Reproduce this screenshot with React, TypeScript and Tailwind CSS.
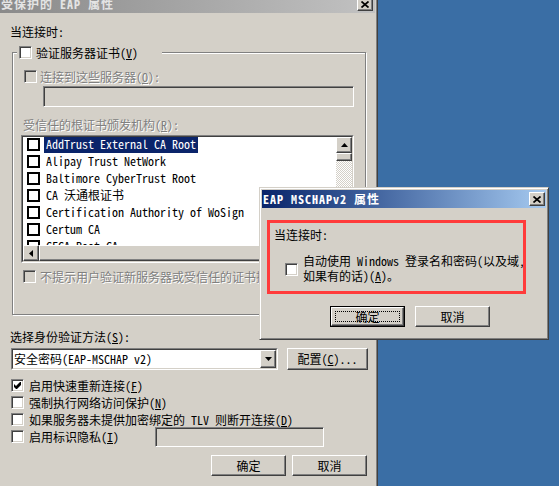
import React from 'react';

const FONT = "font-['Noto_Sans_Mono_CJK_SC','Noto_Sans_CJK_SC',sans-serif]";

// classic 3D edges
const raised =
  'bg-[#d4d0c8] border border-t-white border-l-white border-r-[#404040] border-b-[#404040] shadow-[inset_-1px_-1px_0_#808080]';
const sunken =
  'border border-t-[#808080] border-l-[#808080] border-r-white border-b-white shadow-[inset_1px_1px_0_#404040,inset_-1px_-1px_0_#d4d0c8]';
const frame =
  'bg-[#d4d0c8] p-[2px] border border-t-[#d4d0c8] border-l-[#d4d0c8] border-r-[#404040] border-b-[#404040] shadow-[inset_1px_1px_0_#ffffff,inset_-1px_-1px_0_#808080]';
const dis = 'text-[#808080] [text-shadow:1px_1px_0_#ffffff]';

const certs = [
  'AddTrust External CA Root',
  'Alipay Trust NetWork',
  'Baltimore CyberTrust Root',
  'CA 沃通根证书',
  'Certification Authority of WoSign',
  'Certum CA',
  'CFCA Root CA',
];

function Check({ checked = false, disabled = false }: { checked?: boolean; disabled?: boolean }) {
  return (
    <div
      className={`w-[13px] h-[13px] shrink-0 flex items-center justify-center ${sunken} ${
        disabled ? 'bg-[#d4d0c8]' : 'bg-white'
      }`}
    >
      {checked && (
        <svg width="7" height="7" viewBox="0 0 7 7">
          <polygon points="0,2 2,4 6,0 7,0 7,3 3,7 2,7 0,5" fill="#000" />
        </svg>
      )}
    </div>
  );
}

function CloseBtn() {
  return (
    <div className={`w-[16px] h-[14px] flex items-center justify-center ${raised}`}>
      <svg width="8" height="7" viewBox="0 0 8 7">
        <path d="M0.5 0.5 L7.5 6.5 M7.5 0.5 L0.5 6.5" stroke="#000" strokeWidth="1.7" />
      </svg>
    </div>
  );
}

function Arrow({ dir }: { dir: 'up' | 'down' | 'left' }) {
  const pts = dir === 'up' ? '0,4 3.5,0 7,4' : dir === 'down' ? '0,0 7,0 3.5,4' : '4,0 4,7 0,3.5';
  const w = dir === 'left' ? 4 : 7;
  const h = dir === 'left' ? 7 : 4;
  return (
    <svg width={w} height={h} viewBox={`0 0 ${w} ${h}`}>
      <polygon points={pts} fill="#000" />
    </svg>
  );
}

function Btn({ children, focus = false, className = '' }: { children: React.ReactNode; focus?: boolean; className?: string }) {
  if (focus) {
    return (
      <div className={`border border-black ${className}`}>
        <div className={`h-full flex items-center justify-center p-[3px] ${raised}`}>
          <div className="w-full h-full flex items-center justify-center border border-dotted border-black">{children}</div>
        </div>
      </div>
    );
  }
  return <div className={`flex items-center justify-center ${raised} ${className}`}>{children}</div>;
}

function ListBox() {
  return (
    <div className="w-[333px] h-[128px] border border-t-[#808080] border-l-[#808080] border-r-white border-b-white">
      <div className="h-full border border-t-[#404040] border-l-[#404040] border-r-[#d4d0c8] border-b-[#d4d0c8] bg-white grid grid-cols-[1fr_16px] grid-rows-[1fr_16px]">
        <div className="overflow-hidden flex flex-col">
          <div className="-mt-[1px] flex flex-col">
            {certs.map((c, i) => (
              <div key={c} className="h-[17px] shrink-0 flex items-center pl-[4px]">
                <div className="w-[13px] h-[13px] shrink-0 border-2 border-black bg-white" />
                <span
                  className={`ml-[4px] px-[2px] h-[16px] pb-[1px] flex items-center whitespace-pre ${
                    i === 0 ? 'bg-[#0a246a] text-white' : ''
                  }`}
                >
                  {c}
                </span>
              </div>
            ))}
          </div>
        </div>
        <div className="flex flex-col">
          <Btn className="h-[16px] shrink-0">
            <Arrow dir="up" />
          </Btn>
          <div className={`h-[8px] shrink-0 ${raised}`} />
          <div className="flex-1 bg-[repeating-conic-gradient(#d4d0c8_0_25%,#ffffff_0_50%)] bg-[length:2px_2px]" />
          <Btn className="h-[16px] shrink-0">
            <Arrow dir="down" />
          </Btn>
        </div>
        <div className="flex">
          <Btn className="w-[16px] shrink-0">
            <Arrow dir="left" />
          </Btn>
          <div className={`flex-1 ${raised}`} />
        </div>
        <div className="bg-[#d4d0c8]" />
      </div>
    </div>
  );
}

export default function App() {
  return (
    <div className={`relative w-[559px] h-[486px] overflow-hidden bg-[#3a6ea5] text-[12px] leading-[12px] text-black ${FONT}`}>
      {/* 受保护的 EAP 属性 */}
      <div className={`absolute left-[-4px] top-[-8px] w-[382px] h-[540px] ${frame}`}>
        <div className="h-[18px] flex items-center justify-between bg-linear-to-r from-[#8a8a8a] to-[#c2c2c2] pl-[2px] pr-[2px]">
          <span className="font-bold tracking-[1px] text-[#e4e4e4] whitespace-pre">受保护的 EAP 属性</span>
          <CloseBtn />
        </div>

        <div className="flex flex-col items-start">
          <div className="mt-[13px] ml-[11px] h-[12px]">当连接时:</div>

          <div className="relative mt-[14px] ml-[13px] w-[354px] h-[263px] border border-[#808080] shadow-[inset_1px_1px_0_#ffffff,1px_1px_0_#ffffff] flex flex-col items-start">
            <div className="absolute left-[4px] top-[-7px] w-[145px] h-[13px] bg-[#d4d0c8] flex items-center gap-[4px] pl-[2px]">
              <Check />
              <span className="whitespace-pre">
                验证服务器证书(<u>V</u>)
              </span>
            </div>

            <div className="mt-[17px] ml-[11px] h-[13px] flex items-center gap-[3px]">
              <Check disabled />
              <span className={dis}>
                连接到这些服务器(<u>O</u>):
              </span>
            </div>
            <div className={`mt-[3px] ml-[30px] w-[311px] h-[21px] bg-[#d4d0c8] ${sunken}`} />

            <div className={`mt-[12px] ml-[10px] h-[12px] ${dis}`}>
              受信任的根证书颁发机构(<u>R</u>):
            </div>
            <div className="mt-[4px] ml-[8px]">
              <ListBox />
            </div>

            <div className="mt-[7px] ml-[10px] h-[13px] flex items-center gap-[4px]">
              <Check disabled />
              <span className={`whitespace-nowrap ${dis}`}>不提示用户验证新服务器或受信任的证书授权机构(<u>P</u>)。</span>
            </div>
          </div>

          <div className="mt-[16px] ml-[11px] h-[12px]">
            选择身份验证方法(<u>S</u>):
          </div>
          <div className="mt-[5px] ml-[12px] flex gap-[9px]">
            <div className="w-[267px] h-[22px] border border-t-[#808080] border-l-[#808080] border-r-white border-b-white">
              <div className="h-full flex items-center border border-t-[#404040] border-l-[#404040] border-r-[#d4d0c8] border-b-[#d4d0c8] bg-white">
                <span className="flex-1 pl-[1px] whitespace-pre">安全密码(EAP-MSCHAP v2)</span>
                <Btn className="w-[16px] h-full">
                  <Arrow dir="down" />
                </Btn>
              </div>
            </div>
            <Btn className="w-[81px] h-[22px]">
              配置(<u>C</u>)...
            </Btn>
          </div>

          <div className="mt-[7px] ml-[12px] flex flex-col">
            <div className="h-[17px] flex items-center gap-[5px]">
              <Check checked />
              <span>
                启用快速重新连接(<u>F</u>)
              </span>
            </div>
            <div className="h-[17px] flex items-center gap-[5px]">
              <Check />
              <span>
                强制执行网络访问保护(<u>N</u>)
              </span>
            </div>
            <div className="h-[17px] flex items-center gap-[5px]">
              <Check />
              <span className="whitespace-pre">
                如果服务器未提供加密绑定的 TLV 则断开连接(<u>D</u>)
              </span>
            </div>
            <div className="h-[17px] flex items-center">
              <div className="w-[144px] flex items-center gap-[5px]">
                <Check />
                <span>
                  启用标识隐私(<u>I</u>)
                </span>
              </div>
              <div className={`w-[169px] h-[20px] shrink-0 bg-[#d4d0c8] ${sunken}`} />
            </div>
          </div>

          <div className="mt-[10px] ml-[212px] flex gap-[6px]">
            <Btn className="w-[75px] h-[21px]">确定</Btn>
            <Btn className="w-[75px] h-[21px]">取消</Btn>
          </div>
        </div>
      </div>

      {/* EAP MSCHAPv2 属性 */}
      <div className={`absolute left-[259px] top-[187px] w-[290px] h-[153px] ${frame}`}>
        <div className="h-[18px] flex items-center justify-between bg-linear-to-r from-[#0a246a] to-[#a6caf0] pl-[1px] pr-[1px]">
          <span className="font-bold tracking-[1px] text-white whitespace-pre">EAP MSCHAPv2 属性</span>
          <CloseBtn />
        </div>
        <div className="relative flex flex-col items-start">
          <div className="mt-[21px] ml-[12px] h-[12px]">当连接时:</div>
          <div className="mt-[14px] ml-[23px] flex items-start gap-[5px]">
            <div className="mt-[8px]">
              <Check />
            </div>
            <div className="flex flex-col gap-[3px]">
              <span className="h-[12px] whitespace-pre">自动使用 Windows 登录名和密码(以及域,</span>
              <span className="h-[12px] whitespace-pre">
                如果有的话)(<u>A</u>)。
              </span>
            </div>
          </div>
          <div className="mt-[24px] ml-[68px] flex gap-[10px]">
            <Btn focus className="w-[75px] h-[21px]">
              确定
            </Btn>
            <Btn className="w-[75px] h-[21px]">取消</Btn>
          </div>
          <div className="absolute left-[5px] top-[12px] w-[259px] h-[74px] border-[3px] border-[#ff3b3b] pointer-events-none" />
        </div>
      </div>
    </div>
  );
}
